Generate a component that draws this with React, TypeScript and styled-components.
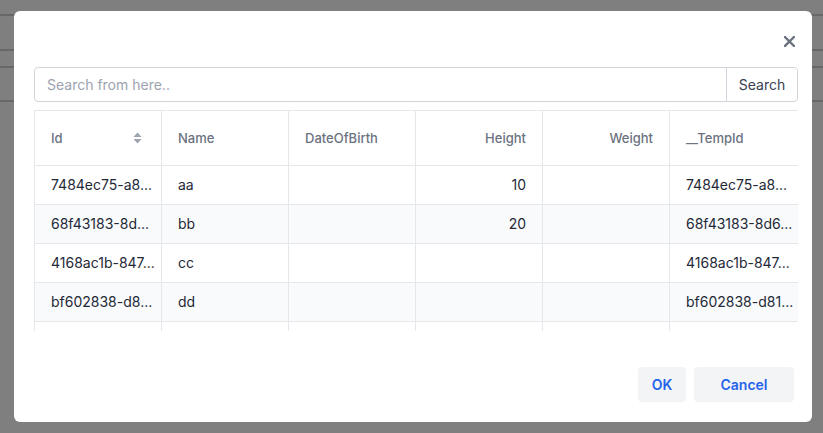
import * as React from 'react'
import styled, { createGlobalStyle } from 'styled-components'

const GlobalStyle = createGlobalStyle`
  html, body { margin: 0; padding: 0; }
  body {
    font-family: Inter, "Noto Sans", sans-serif;
    background: #ffffff;
    overflow: hidden;
  }
`

const Page = styled.div`
  height: 433px;
  display: flex;
  flex-direction: column;
`

const PageLine = styled.div<{ h: number }>`
  height: ${p => p.h}px;
  border-bottom: 2px solid #cfcfcf;
  flex: none;
`

const Overlay = styled.div`
  position: fixed;
  inset: 0;
  background: rgba(0, 0, 0, 0.5);
  padding: 11px 11px 11px 14px;
  box-sizing: border-box;
`

const Dialog = styled.div`
  width: 798px;
  height: 411px;
  background: #fff;
  border-radius: 6px;
  box-sizing: border-box;
  padding: 20px 14px 20px 20px;
  display: flex;
  flex-direction: column;
`

const TopBar = styled.div`
  display: flex;
  justify-content: flex-end;
  align-items: flex-start;
  height: 36px;
`

const Close = styled.button`
  border: 0;
  background: transparent;
  padding: 0;
  margin-top: 2px;
  margin-right: 1px;
  width: 16px;
  height: 16px;
  display: flex;
  align-items: center;
  justify-content: center;
  cursor: pointer;
`

const SearchRow = styled.div`
  display: flex;
  height: 35px;
  width: 764px;
  border: 1px solid #d1d5db;
  border-radius: 4px;
  box-sizing: border-box;
`

const SearchInput = styled.input`
  flex: 1;
  border: 0;
  outline: none;
  padding: 0 12px;
  font-family: Inter, sans-serif;
  font-size: 14px;
  color: #374151;
  background: transparent;
  &::placeholder { color: #9ca3af; }
`

const SearchButton = styled.button`
  border: 0;
  border-left: 1px solid #d1d5db;
  background: #fff;
  width: 71px;
  font-family: Inter, sans-serif;
  font-size: 14px;
  color: #374151;
  border-radius: 0 4px 4px 0;
  padding: 0;
`

const TableWrap = styled.div`
  margin-top: 8px;
  width: 764px;
  height: 221px;
  overflow: hidden;
  border-top: 1px solid #e5e7eb;
  box-sizing: border-box;
`

const Table = styled.table`
  border-collapse: collapse;
  table-layout: fixed;
  width: 790px;
`

const Th = styled.th<{ right?: boolean }>`
  height: 54px;
  padding: 0 16px;
  text-align: ${p => (p.right ? 'right' : 'left')};
  font-size: 13px;
  font-weight: 500;
  color: #6b7280;
  border-left: 1px solid #e5e7eb;
  border-bottom: 1px solid #e5e7eb;
  box-sizing: border-box;
`

const HeadInner = styled.div`
  display: flex;
  align-items: center;
  justify-content: space-between;
  padding-right: 3px;
`

const Row = styled.tr<{ striped?: boolean }>`
  background: ${p => (p.striped ? '#f9fafb' : '#fff')};
`

const Td = styled.td<{ right?: boolean }>`
  height: 39px;
  padding: 0 16px;
  font-size: 14px;
  color: #1f2937;
  text-align: ${p => (p.right ? 'right' : 'left')};
  border-left: 1px solid #e5e7eb;
  border-bottom: 1px solid #e5e7eb;
  white-space: nowrap;
  box-sizing: border-box;
`

const Footer = styled.div`
  margin-top: auto;
  display: flex;
  justify-content: flex-end;
  gap: 8px;
  padding-right: 4px;
`

const ActionButton = styled.button<{ w: number }>`
  width: ${p => p.w}px;
  height: 35px;
  border: 0;
  border-radius: 4px;
  background: #f3f4f6;
  color: #2563eb;
  font-family: Inter, sans-serif;
  font-size: 14px;
  font-weight: 600;
  padding: 0;
`

const columns = [
  { key: 'Id', w: 127, sort: true },
  { key: 'Name', w: 127 },
  { key: 'DateOfBirth', w: 127 },
  { key: 'Height', w: 127, right: true },
  { key: 'Weight', w: 127, right: true },
  { key: '__TempId', w: 155 },
]

const rows = [
  { Id: '7484ec75-a8...', Name: 'aa', Height: '10', TempId: '7484ec75-a8...' },
  { Id: '68f43183-8d...', Name: 'bb', Height: '20', TempId: '68f43183-8d6...' },
  { Id: '4168ac1b-847...', Name: 'cc', Height: '', TempId: '4168ac1b-847...' },
  { Id: 'bf602838-d8...', Name: 'dd', Height: '', TempId: 'bf602838-d81...' },
  { Id: '', Name: '', Height: '', TempId: '' },
]

const SortIcon = () => (
  <svg width="9" height="12" viewBox="0 0 9 12">
    <path d="M4.5 0.5 L8.5 5 H0.5 Z" fill="#9ca3af" />
    <path d="M4.5 11.5 L8.5 7 H0.5 Z" fill="#9ca3af" />
  </svg>
)

const App = () => (
  <>
    <GlobalStyle />
    <Page>
      <PageLine h={14} />
      <PageLine h={33} />
      <PageLine h={15} />
      <PageLine h={32} />
    </Page>
    <Overlay>
      <Dialog>
        <TopBar>
          <Close aria-label="close">
            <svg width="11" height="11" viewBox="0 0 11 11">
              <path d="M1 1 L10 10 M10 1 L1 10" stroke="#6b7280" strokeWidth="2.4" strokeLinecap="square" />
            </svg>
          </Close>
        </TopBar>
        <SearchRow>
          <SearchInput placeholder="Search from here.." />
          <SearchButton>Search</SearchButton>
        </SearchRow>
        <TableWrap>
          <Table>
            <colgroup>
              {columns.map(c => (
                <col key={c.key} style={{ width: c.w }} />
              ))}
            </colgroup>
            <thead>
              <tr>
                {columns.map(c => (
                  <Th key={c.key} right={c.right}>
                    {c.sort ? (
                      <HeadInner>
                        <span>{c.key}</span>
                        <SortIcon />
                      </HeadInner>
                    ) : (
                      c.key
                    )}
                  </Th>
                ))}
              </tr>
            </thead>
            <tbody>
              {rows.map((r, i) => (
                <Row key={i} striped={i % 2 === 1}>
                  <Td>{r.Id}</Td>
                  <Td>{r.Name}</Td>
                  <Td />
                  <Td right>{r.Height}</Td>
                  <Td right />
                  <Td>{r.TempId}</Td>
                </Row>
              ))}
            </tbody>
          </Table>
        </TableWrap>
        <Footer>
          <ActionButton w={48}>OK</ActionButton>
          <ActionButton w={100}>Cancel</ActionButton>
        </Footer>
      </Dialog>
    </Overlay>
  </>
)

export default App
